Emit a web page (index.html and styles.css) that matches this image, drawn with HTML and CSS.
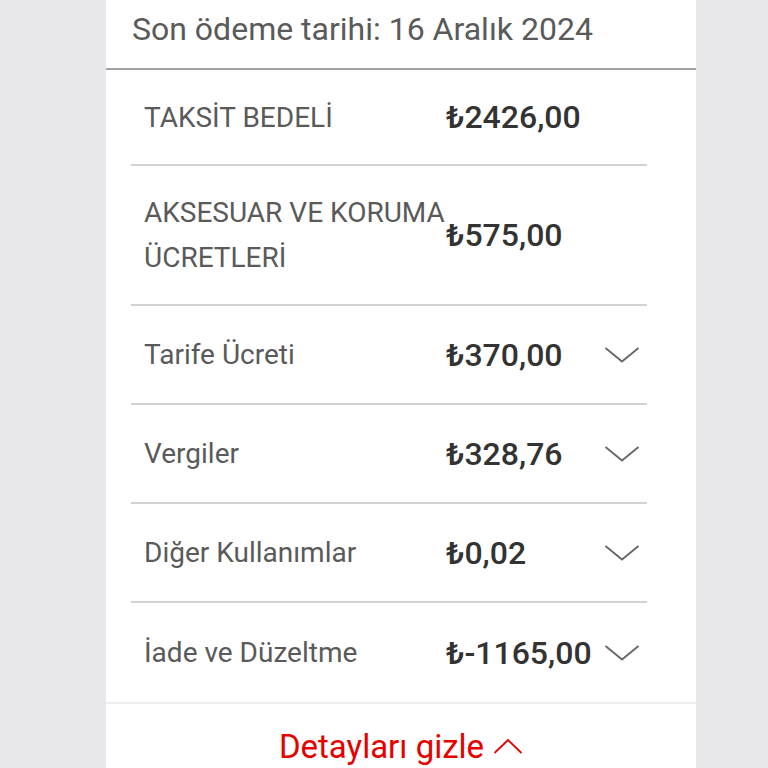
FILE: index.html
```html
<!DOCTYPE html>
<html lang="tr">
<head>
<meta charset="utf-8">
<link rel="stylesheet" href="styles.css">
</head>
<body>
<div class="card">
  <div class="due">Son ödeme tarihi: 16 Aralık 2024</div>
  <div class="list">
    <div class="row first">
      <div class="label">TAKSİT BEDELİ</div>
      <div class="amount">₺2426,00</div>
      <div class="chev"></div>
    </div>
    <div class="row tall">
      <div class="label">AKSESUAR VE KORUMA ÜCRETLERİ</div>
      <div class="amount">₺575,00</div>
      <div class="chev"></div>
    </div>
    <div class="row">
      <div class="label">Tarife Ücreti</div>
      <div class="amount">₺370,00</div>
      <div class="chev"><svg viewBox="0 0 36 18" width="36" height="18"><path d="M1.5 2 L18 15.5 L34.5 2" fill="none" stroke="#666" stroke-width="1.8"/></svg></div>
    </div>
    <div class="row">
      <div class="label">Vergiler</div>
      <div class="amount">₺328,76</div>
      <div class="chev"><svg viewBox="0 0 36 18" width="36" height="18"><path d="M1.5 2 L18 15.5 L34.5 2" fill="none" stroke="#666" stroke-width="1.8"/></svg></div>
    </div>
    <div class="row">
      <div class="label">Diğer Kullanımlar</div>
      <div class="amount">₺0,02</div>
      <div class="chev"><svg viewBox="0 0 36 18" width="36" height="18"><path d="M1.5 2 L18 15.5 L34.5 2" fill="none" stroke="#666" stroke-width="1.8"/></svg></div>
    </div>
    <div class="row last">
      <div class="label">İade ve Düzeltme</div>
      <div class="amount">₺-1165,00</div>
      <div class="chev"><svg viewBox="0 0 36 18" width="36" height="18"><path d="M1.5 2 L18 15.5 L34.5 2" fill="none" stroke="#666" stroke-width="1.8"/></svg></div>
    </div>
  </div>
  <div class="footer">
    <span class="toggle">Detayları gizle</span>
    <svg class="caret" viewBox="0 0 30 18" width="30" height="18"><path d="M1.5 16 L15 3 L28.5 16" fill="none" stroke="#e60000" stroke-width="1.8"/></svg>
  </div>
</div>
</body>
</html>
```
FILE: styles.css
```css
html, body {
  margin: 0;
  padding: 0;
  background: #e8e8ea;
  height: 768px;
  overflow: hidden;
}
body {
  font-family: Roboto, "Liberation Sans", sans-serif;
}
.card {
  width: 590px;
  margin-left: 106px;
  background: #fff;
  height: 768px;
}
.due {
  height: 70px;
  box-sizing: border-box;
  padding: 10px 0 0 26px;
  font-size: 32px;
  line-height: 38px;
  color: #5a5a5a;
  border-bottom: 2px solid #a3a3a3;
}
.list {
  padding: 0 49px 0 25px;
}
.row {
  box-sizing: border-box;
  display: grid;
  grid-template-columns: 302px 1fr 40px;
  align-items: center;
  height: 99px;
  padding: 0 7px 0 13px;
  border-bottom: 2px solid #d2d2d2;
}
.row.first {
  height: 96px;
}
.row.tall {
  height: 140px;
}
.row.last {
  border-bottom: none;
}
.label {
  font-size: 28px;
  line-height: 45px;
  color: #5a5a5a;
}
.amount {
  font-size: 32px;
  font-weight: 500;
  color: #333;
}
.chev {
  display: flex;
  justify-content: flex-end;
}
.footer {
  border-top: 2px solid #eeeeee;
  display: flex;
  justify-content: center;
  align-items: center;
  gap: 9px;
  height: 84px;
}
.toggle {
  color: #e60000;
  font-size: 33px;
}
```
